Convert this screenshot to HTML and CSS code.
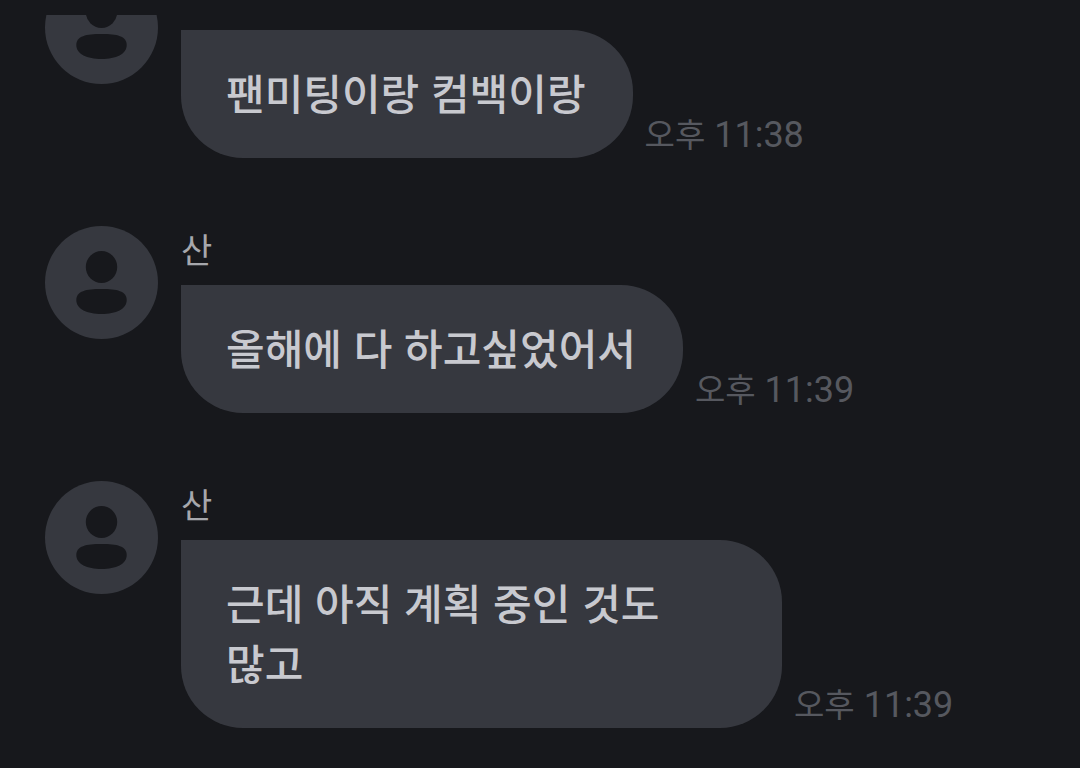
FILE: index.html
```
<!DOCTYPE html>
<html lang="ko">
<head>
    <meta charset="UTF-8">
    <meta name="viewport" content="width=device-width, initial-scale=1.0">
    <title>Chat</title>
    <link rel="stylesheet" href="styles.css">
</head>
<body>
    <svg class="symbols" aria-hidden="true">
        <symbol id="person" viewBox="0 0 113 113">
            <ellipse cx="56.5" cy="41" rx="15.7" ry="16"/>
            <path d="M56.5 63C72 63 81.7 65 81.7 74C81.7 83 71 88 56.5 88C42 88 31.3 83 31.3 74C31.3 65 41 63 56.5 63Z"/>
        </symbol>
    </svg>

    <main class="chat">
        <article class="message">
            <div class="avatar"><svg><use href="#person"/></svg></div>
            <div class="content">
                <div class="name"></div>
                <div class="row">
                    <p class="bubble">팬미팅이랑 컴백이랑</p>
                    <time class="time"><span class="period">오후</span> 11:38</time>
                </div>
            </div>
        </article>

        <article class="message">
            <div class="avatar"><svg><use href="#person"/></svg></div>
            <div class="content">
                <div class="name">산</div>
                <div class="row">
                    <p class="bubble">올해에 다 하고싶었어서</p>
                    <time class="time"><span class="period">오후</span> 11:39</time>
                </div>
            </div>
        </article>

        <article class="message">
            <div class="avatar"><svg><use href="#person"/></svg></div>
            <div class="content">
                <div class="name">산</div>
                <div class="row">
                    <p class="bubble">근데 아직 계획 중인 것도 많고</p>
                    <time class="time"><span class="period">오후</span> 11:39</time>
                </div>
            </div>
        </article>
    </main>
</body>
</html>
```

FILE: styles.css
```
* {
    box-sizing: border-box;
}

body {
    margin: 0;
    padding-top: 15px;
    background-color: #17181c;
    color: #c8c9cf;
    font-family: Roboto, "Noto Sans CJK KR", sans-serif;
}

.symbols {
    display: none;
}

.chat {
    display: flex;
    flex-direction: column;
    justify-content: flex-end; /* newest message stays at the bottom */
    gap: 68px;
    height: calc(100vh - 55px);
    padding: 0 45px;
    overflow: hidden;
}

.message {
    display: flex;
    flex-shrink: 0;
    align-items: flex-start;
    gap: 23px;
}

.avatar {
    flex-shrink: 0;
    width: 113px;
    height: 113px;
    border-radius: 50%;
    background-color: #36383f;
}

.avatar svg {
    display: block;
    width: 100%;
    height: 100%;
    fill: #17181c;
}

.content {
    flex: 1;
    min-width: 0;
}

.name {
    height: 59px;
    font-size: 34px;
    line-height: 50px;
    color: #a6a7ac;
}

.row {
    display: flex;
    align-items: flex-end;
    gap: 12px;
}

.bubble {
    max-width: 601px;
    margin: 0;
    padding: 32px 47px 36px 45px;
    border-radius: 0 62px 62px 62px;
    background-color: #36383f;
    font-family: "Noto Sans CJK KR", sans-serif;
    font-size: 42px;
    font-weight: 500;
    line-height: 60px;
    word-break: keep-all;
}

.time {
    padding-bottom: 1px;
    font-size: 36px;
    line-height: 42px;
    color: #56585f;
    white-space: nowrap;
}

.period {
    font-size: 33px;
}
```
